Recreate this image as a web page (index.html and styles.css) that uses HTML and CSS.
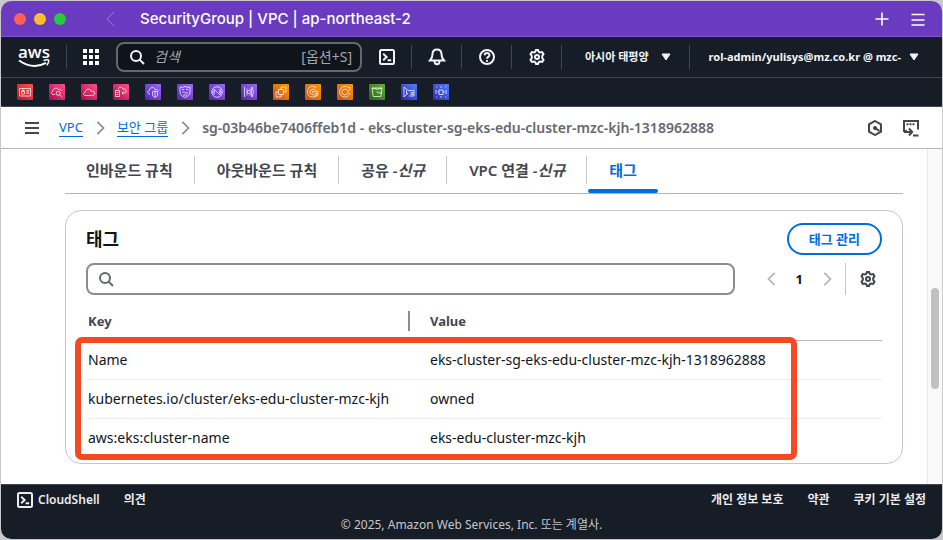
FILE: index.html
```html
<!DOCTYPE html>
<html lang="ko">
<head>
<meta charset="utf-8">
<meta name="viewport" content="width=device-width, initial-scale=1">
<title>SecurityGroup | VPC | ap-northeast-2</title>
<link rel="stylesheet" href="styles.css">
</head>
<body>
<svg class="sprite" aria-hidden="true">
  <defs>
    <linearGradient id="g-red" x1="0" y1="1" x2="1" y2="0"><stop offset="0" stop-color="#bd1525"/><stop offset="1" stop-color="#ff5252"/></linearGradient>
    <linearGradient id="g-pink" x1="0" y1="1" x2="1" y2="0"><stop offset="0" stop-color="#b0084d"/><stop offset="1" stop-color="#ff4f8b"/></linearGradient>
    <linearGradient id="g-purple" x1="0" y1="1" x2="1" y2="0"><stop offset="0" stop-color="#4d27a8"/><stop offset="1" stop-color="#a166ff"/></linearGradient>
    <linearGradient id="g-orange" x1="0" y1="1" x2="1" y2="0"><stop offset="0" stop-color="#c8511b"/><stop offset="1" stop-color="#ff9900"/></linearGradient>
    <linearGradient id="g-green" x1="0" y1="1" x2="1" y2="0"><stop offset="0" stop-color="#1b660f"/><stop offset="1" stop-color="#6cae3e"/></linearGradient>
    <linearGradient id="g-blue" x1="0" y1="1" x2="1" y2="0"><stop offset="0" stop-color="#2e27ad"/><stop offset="1" stop-color="#527fff"/></linearGradient>
    <symbol id="i-search" viewBox="0 0 16 16"><circle cx="7" cy="7" r="5"/><path d="M10.6 10.6 15 15"/></symbol>
    <symbol id="i-shell" viewBox="0 0 16 16"><rect x="1" y="1" width="14" height="14" rx="1.5"/><path d="M4.2 4.8 7.6 8l-3.4 3.2M8.6 11.2h3.6"/></symbol>
    <symbol id="i-gear" viewBox="0 0 16 16"><path d="M6.3 2.7 7 1h2l.7 1.700 1.300.8 2.200-.4 1.300 2.100L13.200 7v2l1.300 1.800-1.300 2.100-2.200-.4-1.300.8L9 15H7l-.7-1.700-1.300-.8-2.200.4-1.300-2.100L2.800 9V7L1.500 5.200l1.300-2.100 2.200.4z"/><circle cx="8" cy="8" r="2"/></symbol>
    <symbol id="i-right" viewBox="0 0 16 16"><path d="M5 1l7 7-7 7"/></symbol>
    <symbol id="i-left" viewBox="0 0 16 16"><path d="M11 1 4 8l7 7"/></symbol>
    <symbol id="i-caret" viewBox="0 0 10 8"><path d="M1 1h8L5 7z" fill="currentColor" stroke="currentColor" stroke-linejoin="round"/></symbol>
  </defs>
</svg>
<div class="window">
  <header class="titlebar">
    <div class="lights"><i class="light close"></i><i class="light min"></i><i class="light max"></i></div>
    <button class="back" aria-label="뒤로"><svg class="icon thin" width="18" height="16"><use href="#i-left"/></svg></button>
    <h1 class="title">SecurityGroup | VPC | ap-northeast-2</h1>
    <button aria-label="새 탭"><svg class="icon fine" width="16" height="16" viewBox="0 0 16 16"><path d="M8 1.500v13M1.500 8h13"/></svg></button>
    <button aria-label="메뉴"><svg class="icon fine" width="16" height="16" viewBox="0 0 16 16"><path d="M1.500 3.500h13M1.500 9h13M1.500 14h13"/></svg></button>
  </header>

  <nav class="topnav" aria-label="AWS">
    <a class="logo" href="#" aria-label="aws"><svg width="34" height="36" viewBox="0 -6 34 36"><text class="logo-text" x="17" y="13" text-anchor="middle">aws</text><path d="M2 15.500Q16 25 29 17.800" fill="none" stroke="#fff" stroke-width="2"/><path d="M26.500 15.500q4-1.200 5.200-.4.600 1.800-1.900 5.200" fill="none" stroke="#fff" stroke-width="1.400"/></svg></a>
    <span class="sep"></span>
    <button class="apps" aria-label="서비스"><svg width="16" height="16" viewBox="0 0 16 16" fill="#fff"><path d="M0 0h4v4H0zM6 0h4v4H6zM12 0h4v4h-4zM0 6h4v4H0zM6 6h4v4H6zM12 6h4v4h-4zM0 12h4v4H0zM6 12h4v4H6zM12 12h4v4h-4z"/></svg></button>
    <label class="search"><svg class="icon" width="16" height="16"><use href="#i-search"/></svg><input type="search" placeholder="검색" aria-label="검색"><span>[옵션+S]</span></label>
    <div class="tools">
      <button aria-label="CloudShell"><svg class="icon" width="16" height="16"><use href="#i-shell"/></svg></button>
      <button aria-label="알림"><svg class="icon" width="18" height="18" viewBox="0 0 18 18"><path d="M9 1.500c-3 0-4.500 2-4.500 4.700 0 3-.8 4.300-2.500 6.300h14c-1.700-2-2.500-3.300-2.500-6.300C13.500 3.500 12 1.500 9 1.500zM6.500 13c0 2 1 3.200 2.500 3.200s2.500-1.200 2.500-3.200"/></svg></button>
      <button aria-label="도움말"><svg class="icon" width="16" height="16" viewBox="0 0 16 16"><circle cx="8" cy="8" r="7"/><path d="M5.700 6.300C5.700 3.300 10.400 3.300 10.400 6.200 10.400 7.900 8 7.900 8 9.800M8 11v1.700"/></svg></button>
      <button aria-label="설정"><svg class="icon" width="16" height="16"><use href="#i-gear"/></svg></button>
    </div>
    <button class="menu region" aria-haspopup="true">아시아 태평양<svg width="10" height="8"><use href="#i-caret"/></svg></button>
    <button class="menu account" aria-haspopup="true">rol-admin/yulisys@mz.co.kr @ mzc-<svg width="10" height="8"><use href="#i-caret"/></svg></button>
  </nav>

  <nav class="favorites" aria-label="즐겨찾기">
    <a href="#" aria-label="AWS 1"><svg class="service" viewBox="0 0 16 16"><rect width="16" height="16" rx="1" fill="url(#g-red)"/><path d="M2.500 4.500h11v7.500h-11zM4.500 7.500h3v2.500h-3zM5 7.500V6h2v1.500M9.500 6.500h2.500M9.500 8h2.500M9.500 9.500h2.500"/></svg></a>
    <a href="#" aria-label="AWS 2"><svg class="service" viewBox="0 0 16 16"><rect width="16" height="16" rx="1" fill="url(#g-pink)"/><path d="M6 10.500H4C2 10 2 7.500 4 7c0-3 4-4 5.500-1.500 2-.5 2.500.5 2.500 1.500"/><circle cx="9.200" cy="9.300" r="2"/><path d="M10.700 10.800l2.500 2.500"/></svg></a>
    <a href="#" aria-label="AWS 3"><svg class="service" viewBox="0 0 16 16"><rect width="16" height="16" rx="1" fill="url(#g-pink)"/><path d="M4.500 11.500C2 11.500 2 8.500 4.300 8.300 4.500 4.500 9 4 10 7.300c3-.5 4 1 3.500 2.700-.3 1.500-1.500 1.500-2.500 1.500z"/></svg></a>
    <a href="#" aria-label="AWS 4"><svg class="service" viewBox="0 0 16 16"><rect width="16" height="16" rx="1" fill="url(#g-pink)"/><path d="M2.500 6.500h4v6h-4zM3.500 8.500h2M3.500 10.500h2M5 5c1-2.500 4-2.500 5 0 3-.5 4 2.500 2.500 4H9M10.500 7.500 9 9l1.500 1.500"/></svg></a>
    <a href="#" aria-label="AWS 5"><svg class="service" viewBox="0 0 16 16"><rect width="16" height="16" rx="1" fill="url(#g-purple)"/><path d="M5 10C2 10 2 7 4.200 6.800 4.500 3 9 2.500 10.200 5.500c2-.3 3 .7 3 2M7.500 7.800 10 7l2.500.8v3c0 1.700-2.500 2.700-2.500 2.700s-2.500-1-2.500-2.700zM10 7v6"/></svg></a>
    <a href="#" aria-label="AWS 6"><svg class="service" viewBox="0 0 16 16"><rect width="16" height="16" rx="1" fill="url(#g-purple)"/><path d="M3 3q2 1 5-.5Q11 4 13 3v5c0 3-2.500 4.500-5 5.500C5.500 12.500 3 11 3 8zM5 5.500h2M9 5.500h2M5 8.500c2-2 4 2 6 0M6 11h4"/></svg></a>
    <a href="#" aria-label="AWS 7"><svg class="service" viewBox="0 0 16 16"><rect width="16" height="16" rx="1" fill="url(#g-purple)"/><circle cx="8" cy="8" r="5.300"/><path d="M5 11V5l6 6V5M3 8h3M10 8h3"/></svg></a>
    <a href="#" aria-label="AWS 8"><svg class="service" viewBox="0 0 16 16"><rect width="16" height="16" rx="1" fill="url(#g-purple)"/><path d="M3.500 3v10M6 4.500v7M8 6l-2 2 2 2M9 4.500v7M11 3q3 5 0 10-1.500-5 0-10z"/></svg></a>
    <a href="#" aria-label="AWS 9"><svg class="service" viewBox="0 0 16 16"><rect width="16" height="16" rx="1" fill="url(#g-orange)"/><path d="M5.500 5.500h5v5h-5zM8 5.500V3h5v5h-2.500M5.500 8H3v5h5v-2.500"/></svg></a>
    <a href="#" aria-label="AWS 10"><svg class="service" viewBox="0 0 16 16"><rect width="16" height="16" rx="1" fill="url(#g-orange)"/><path d="M11 3.500A5.400 5.400 0 1 0 13 7M8 5l3 1.500v3L8 11 5 9.500v-3zM6.500 7.500h3M8 7.500v2M12 9v3H9.500"/></svg></a>
    <a href="#" aria-label="AWS 11"><svg class="service" viewBox="0 0 16 16"><rect width="16" height="16" rx="1" fill="url(#g-orange)"/><path d="M10.500 3A5.400 5.400 0 1 0 13.200 9M8 5l3 1.500v3L8 11 5 9.500v-3zM11 3.500h2v3"/></svg></a>
    <a href="#" aria-label="AWS 12"><svg class="service" viewBox="0 0 16 16"><rect width="16" height="16" rx="1" fill="url(#g-green)"/><path d="M3 4h10l-1.200 8.500H4.200zM3 4q5 2.500 10 0M7.500 8 13 9.500"/></svg></a>
    <a href="#" aria-label="AWS 13"><svg class="service" viewBox="0 0 16 16"><rect width="16" height="16" rx="1" fill="url(#g-blue)"/><path d="M3 3v10M3 3l5 4M3 13l4-4M5.500 6v4M8 6.500h5V12H8M10 8.500h2v2h-2z"/></svg></a>
    <a href="#" aria-label="AWS 14"><svg class="service" viewBox="0 0 16 16"><rect width="16" height="16" rx="1" fill="url(#g-blue)"/><path d="M6 6h4v4.500H6zM3 6v4M13 6v4M4.500 8H6M10 8h1.500M3 3h1M7 3h2M12 3h1M3 13h1M7 13h2M12 13h1"/></svg></a>
  </nav>

  <div class="crumbbar">
    <button aria-label="탐색 열기"><svg class="icon" width="16" height="16" viewBox="0 0 16 16"><path d="M1 3h14M1 8h14M1 13h14"/></svg></button>
    <nav class="crumbs" aria-label="경로">
      <a href="#">VPC</a>
      <svg class="icon muted" width="14" height="14"><use href="#i-right"/></svg>
      <a href="#">보안 그룹</a>
      <svg class="icon muted" width="14" height="14"><use href="#i-right"/></svg>
      <strong>sg-03b46be7406ffeb1d - eks-cluster-sg-eks-edu-cluster-mzc-kjh-1318962888</strong>
    </nav>
    <button aria-label="Amazon Q"><svg class="icon" width="16" height="16" viewBox="0 0 16 16"><path d="M8 1l6 3.400v7.200L8 15l-6-3.400V4.400z"/><path d="M8 8l4.500 2.800"/><circle cx="8" cy="8" r="1.600" fill="currentColor" stroke-width="1"/></svg></button>
    <button aria-label="CloudShell 열기"><svg class="icon" width="18" height="18" viewBox="0 0 18 18"><path d="M5 12H2V2h14v8.500M2 13h8M7 9.500l3.200 3.500L7 16.500M11 16.500h5.500M4.500 5.200h2M7.500 5.200h2M10.500 5.200h2"/></svg></button>
  </div>

  <div class="body">
    <main class="content">
      <div class="tabs" role="tablist">
        <button role="tab">인바운드 규칙</button>
        <button role="tab">아웃바운드 규칙</button>
        <button role="tab">공유 <em>-신규</em></button>
        <button role="tab">VPC 연결 <em>-신규</em></button>
        <button role="tab" aria-selected="true">태그</button>
      </div>
      <section class="panel">
        <div class="panel-head"><h2>태그</h2><button class="manage">태그 관리</button></div>
        <div class="filter">
          <label class="find"><svg class="icon" width="16" height="16"><use href="#i-search"/></svg><input type="text" aria-label="태그 찾기"></label>
          <div class="pager">
            <button aria-label="이전 페이지"><svg class="icon" width="14" height="14"><use href="#i-left"/></svg></button>
            <b>1</b>
            <button aria-label="다음 페이지"><svg class="icon" width="14" height="14"><use href="#i-right"/></svg></button>
          </div>
          <button class="prefs" aria-label="기본 설정"><svg class="icon" width="16" height="16"><use href="#i-gear"/></svg></button>
        </div>
        <div class="tags">
          <table>
            <thead><tr><th scope="col"><span>Key</span></th><th scope="col">Value</th></tr></thead>
            <tbody>
              <tr><td>Name</td><td>eks-cluster-sg-eks-edu-cluster-mzc-kjh-1318962888</td></tr>
              <tr><td>kubernetes.io/cluster/eks-edu-cluster-mzc-kjh</td><td>owned</td></tr>
              <tr><td>aws:eks:cluster-name</td><td>eks-edu-cluster-mzc-kjh</td></tr>
            </tbody>
          </table>
          <div class="highlight"></div>
        </div>
      </section>
    </main>
    <div class="rail"><div class="thumb"></div></div>
  </div>

  <footer class="footer">
    <div class="links">
      <a class="shell" href="#"><svg class="icon" width="16" height="16"><use href="#i-shell"/></svg>CloudShell</a>
      <a href="#">의견</a>
      <a class="push" href="#">개인 정보 보호</a>
      <a href="#">약관</a>
      <a href="#">쿠키 기본 설정</a>
    </div>
    <p>© 2025, Amazon Web Services, Inc. 또는 계열사.</p>
  </footer>
</div>
</body>
</html>
```
FILE: styles.css
```css
* { box-sizing: border-box; }
body {
  margin: 0;
  min-height: 100vh;
  display: flex;
  padding: 1px;
  background: #c9c9cb;
  color: #0f141a;
  font: 13px/20px "Noto Sans", "Noto Sans CJK KR", sans-serif;
}
button, input { font: inherit; color: inherit; background: none; border: 0; padding: 0; margin: 0; }
button { display: inline-flex; align-items: center; justify-content: center; }
a { color: inherit; text-decoration: none; }
svg { display: block; flex: none; }
.sprite { position: absolute; width: 0; height: 0; }
.icon { fill: none; stroke: currentColor; stroke-width: 2; }
.icon.thin { stroke-width: 1; }
.icon.fine { stroke-width: 1.6; }

.window {
  flex: 1;
  min-width: 0;
  display: flex;
  flex-direction: column;
  border-radius: 10px;
  overflow: hidden;
  background: #fff;
}

.titlebar {
  display: flex;
  align-items: center;
  height: 36px;
  padding: 0 16px 0 13px;
  gap: 20px;
  background: #6a3bbf;
  border-bottom: 1px solid #8054cc;
  color: #fff;
}
.lights { display: flex; gap: 8px; }
.light { width: 12px; height: 12px; border-radius: 50%; }
.close { background: #ff5f57; }
.min { background: #febc2e; }
.max { background: #28c840; }
.back { margin-left: 16px; color: #9877d6; }
.title { flex: 1; margin: 0; font: 500 15px/20px Inter, sans-serif; }

.topnav {
  display: flex;
  align-items: center;
  height: 41px;
  background: #161d26;
  border-bottom: 1px solid #424650;
  color: #f3f3f7;
}
.logo { margin-left: 16px; }
.logo-text { font: 600 17px "Open Sans", sans-serif; fill: #fff; }
.sep { width: 1px; height: 24px; margin: 0 16px 0 15px; background: #424650; }
.search {
  display: flex;
  align-items: center;
  flex: 0 1 246px;
  min-width: 0;
  height: 30px;
  margin-left: 17px;
  padding: 0 8px 0 11px;
  gap: 9px;
  border: 2px solid #656871;
  border-radius: 8px;
  background: #0f141a;
  font-size: 14px;
}
.search input { flex: 1; width: 0; min-width: 0; outline: 0; }
.search input::placeholder { color: #a4a4ad; font-style: italic; opacity: 1; }
.search span { color: #a4a4ad; }
.tools { display: flex; }
.tools button { width: 50px; height: 24px; border-right: 1px solid #424650; }
.menu { height: 24px; gap: 12px; font-size: 11px; font-weight: 700; white-space: nowrap; }
.region { padding: 0 18px 0 23px; border-right: 1px solid #424650; }
.account { padding-left: 19px; gap: 8px; }

.favorites {
  display: flex;
  align-items: center;
  height: 29px;
  padding-left: 16px;
  gap: 16px;
  background: #161d26;
  border-bottom: 1px solid #424650;
}
.service { width: 16px; height: 16px; fill: none; }
.service path, .service circle { stroke: #fff; stroke-width: .8; stroke-opacity: .9; }

.crumbbar {
  display: flex;
  align-items: center;
  height: 42px;
  padding: 0 22px 0 23px;
  gap: 19px;
  border-bottom: 1px solid #b4b4bb;
  color: #424650;
}
.crumbs { display: flex; align-items: center; flex: 1; gap: 10px; white-space: nowrap; }
.crumbs a { color: #006ce0; border-bottom: 1px solid #006ce0; line-height: 18px; }
.crumbs strong { color: #656871; font-size: 14px; font-weight: 600; }
.muted { color: #8c8c94; }

.body { flex: 1; display: flex; }
.content { flex: 1; min-width: 0; padding: 0 24px 20px 64px; }
.rail {
  width: 15px;
  display: grid;
  grid-template-rows: 139fr 101fr 95fr;
  justify-items: center;
  background: #fafafa;
  border-left: 1px solid #e8e8e8;
}
.thumb { grid-row: 2; width: 8px; border-radius: 4px; background: #c1c1c1; }

.tabs { display: flex; align-items: stretch; height: 45px; border-bottom: 1px solid #b4b4bb; }
.tabs button {
  position: relative;
  padding: 0 21px 2px;
  color: #424650;
  font-size: 15px;
  font-weight: 600;
  white-space: pre;
}
.tabs button + button { margin-left: 2px; }
.tabs button:not(:last-child)::after {
  content: "";
  position: absolute;
  right: -1px;
  top: 7px;
  width: 1px;
  height: 28px;
  background: #c6c6cd;
}
.tabs [aria-selected] { color: #006ce0; }
.tabs [aria-selected]::before {
  content: "";
  position: absolute;
  left: 0;
  right: 0;
  bottom: 0;
  height: 4px;
  border-radius: 2px;
  background: #006ce0;
}

.panel { margin-top: 16px; padding: 12px 20px 6px; border: 1px solid #c6c6cd; border-radius: 16px; }
.panel-head { display: flex; align-items: center; justify-content: space-between; }
h2 { margin: 0; font-size: 18px; line-height: 24px; }
.manage { height: 32px; padding: 0 20px; border: 2px solid #006ce0; border-radius: 16px; color: #006ce0; font-weight: 700; }
.filter { display: flex; align-items: center; margin-top: 8px; color: #424650; }
.find { display: flex; align-items: center; flex: 1; height: 32px; padding: 0 10px; gap: 8px; border: 2px solid #8c8c94; border-radius: 8px; color: #656871; }
.find input { flex: 1; min-width: 0; outline: 0; }
.pager { display: flex; align-items: center; margin: 0 11px 0 30px; gap: 17px; }
.pager button { color: #b4b4bb; }
.pager b { color: #0f141a; }
.prefs { height: 32px; padding: 0 6px 0 14px; border-left: 1px solid #c6c6cd; }

.tags { position: relative; margin-top: 8px; }
table { width: 100%; table-layout: fixed; border-collapse: separate; border-spacing: 0; }
th, td { text-align: left; padding: 9px 2px; white-space: nowrap; }
td { font-size: 14px; }
th:first-child { width: 324px; }
th { color: #424650; padding: 8px 2px 9px; border-bottom: 1px solid #b4b4bb; }
th:first-child { padding-right: 0; }
th span { display: block; line-height: 20px; border-right: 2px solid #8c8c94; }
th:last-child, td:last-child { padding-left: 20px; }
tbody tr:not(:last-child) td { border-bottom: 1px solid #ebebf0; }
.highlight {
  position: absolute;
  top: 34px;
  left: -11px;
  bottom: -3px;
  right: 85px;
  border: 6px solid #f54923;
  border-radius: 7px;
}

.footer { padding: 5px 16px 4px; background: #161d26; border-top: 1px solid #424650; color: #ebebf0; font-size: 12px; }
.links { display: flex; align-items: center; gap: 24px; font-weight: 600; }
.shell { display: flex; align-items: center; gap: 5px; }
.push { margin-left: auto; }
.footer p { margin: 5px 0 0; text-align: center; color: #c6c6cd; }
```
